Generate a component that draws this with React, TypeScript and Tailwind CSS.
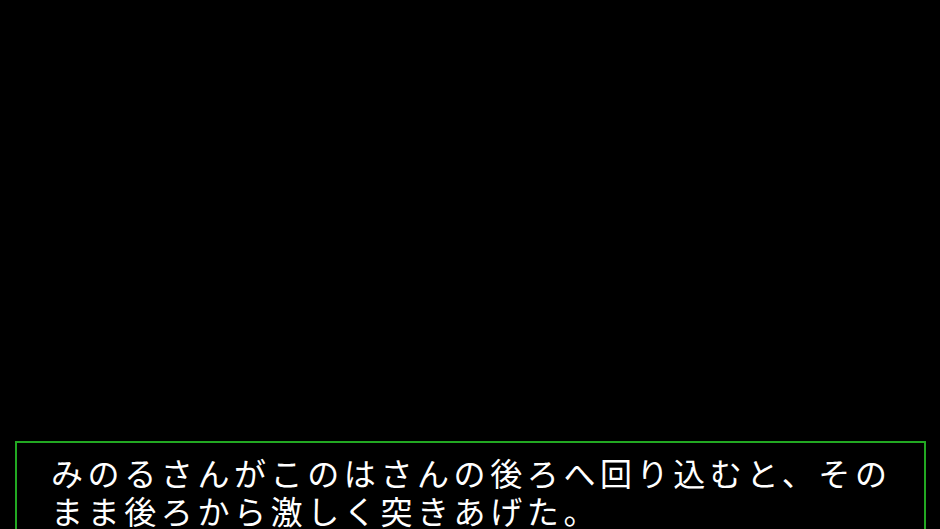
import React from 'react';

const lines = [
  'みのるさんがこのはさんの後ろへ回り込むと、その',
  'まま後ろから激しく突きあげた。',
];

const App = () => {
  return (
    <div className="w-[940px] h-[529px] bg-black overflow-hidden flex flex-col">
      {/* message window */}
      <div className="mt-[441px] ml-[15px] w-[911px] h-[100px] shrink-0 border-2 border-[#22a822] pl-[34px] pt-[10px]">
        {lines.map((line, i) => (
          <p
            key={i}
            className="text-white text-[32px] leading-[38px] tracking-[4.6px] whitespace-nowrap"
            style={{ fontFamily: '"Noto Sans CJK JP", sans-serif' }}
          >
            {line}
          </p>
        ))}
      </div>
    </div>
  );
};

export default App;
